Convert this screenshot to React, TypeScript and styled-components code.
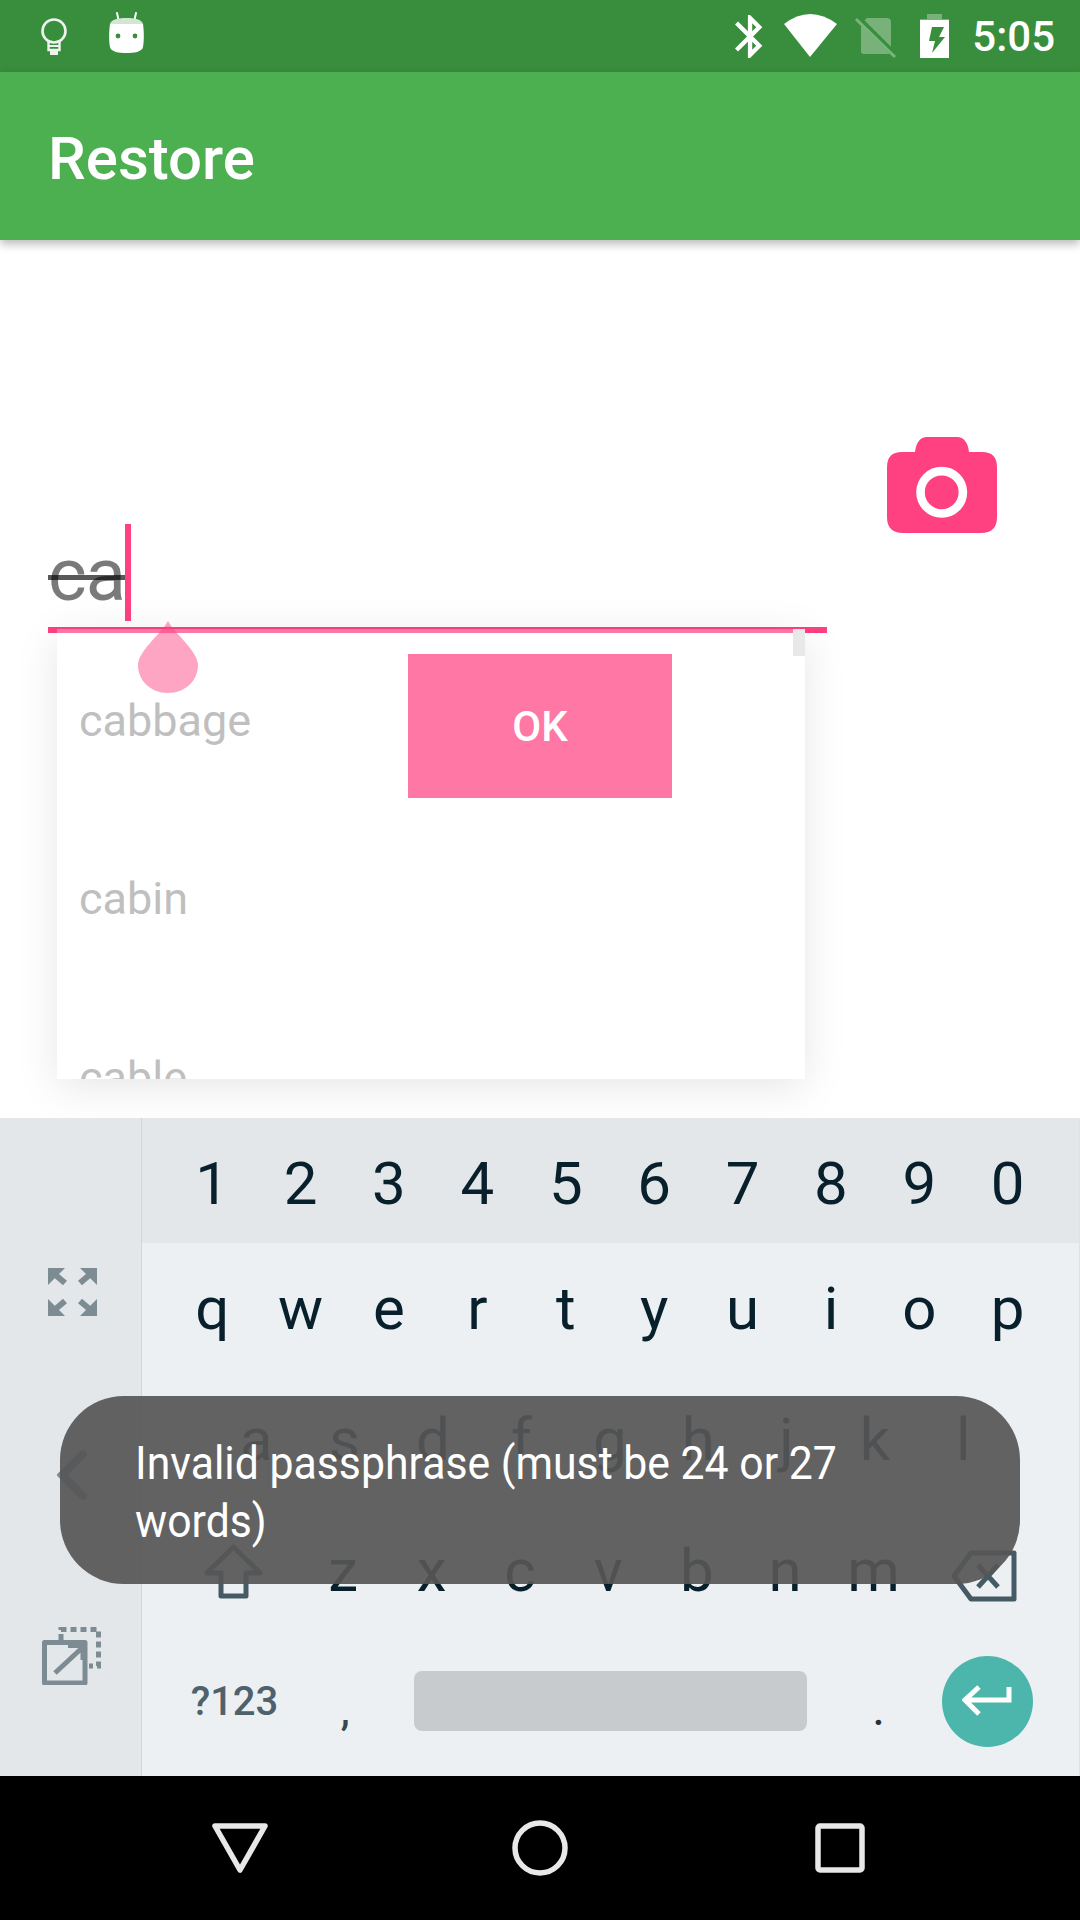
import styled, { createGlobalStyle } from "styled-components";

const GlobalStyle = createGlobalStyle`
    html, body {
        margin: 0;
        padding: 0;
        background: #fff;
        font-family: Roboto, "Noto Sans", sans-serif;
    }
`;

const Page = styled.div`
    position: relative;
    width: 1080px;
    height: 1920px;
    overflow: hidden;
    display: flex;
    flex-direction: column;
    background: #fff;
`;

const StatusBar = styled.div`
    height: 72px;
    background: #388e3c;
    display: flex;
    justify-content: space-between;
    padding: 0 25px 0 41px;
`;
const StatusGroup = styled.div<{ $gap?: number }>`
    display: flex;
    align-items: center;
    gap: ${(p) => p.$gap ?? 0}px;
`;
const Clock = styled.span`
    margin-left: 10px;
    color: #fff;
    font-size: 42px;
    font-weight: 500;
`;

const AppBar = styled.div`
    position: relative;
    z-index: 1;
    height: 168px;
    box-sizing: border-box;
    padding: 4px 0 0 48px;
    background: #4caf50;
    box-shadow: 0 4px 9px rgba(0, 0, 0, 0.28);
    display: flex;
    align-items: center;
`;
const Title = styled.h1`
    margin: 0;
    color: #fff;
    font-size: 60px;
    font-weight: 500;
`;

const Content = styled.div`
    height: 878px;
    box-sizing: border-box;
    padding: 197px 0 0 48px;
    display: flex;
    gap: 60px;
`;
const Field = styled.div`
    width: 779px;
    margin-top: 87px;
    height: 103px;
    border-bottom: 6px solid #ff4081;
    display: flex;
    align-items: flex-start;
`;
const Typed = styled.span`
    font-size: 74px;
    letter-spacing: -1px;
    line-height: 101px;
    color: #7a7a7a;
    text-decoration: line-through;
    text-decoration-color: rgba(0, 0, 0, 0.65);
    text-decoration-thickness: 5px;
`;
const Cursor = styled.span`
    width: 6px;
    height: 97px;
    background: #ff4081;
`;

const OkButton = styled.button`
    position: absolute;
    left: 408px;
    top: 654px;
    width: 264px;
    height: 144px;
    border: 0;
    padding: 0;
    background: #ff4081;
    color: #fff;
    font-family: Roboto, sans-serif;
    font-size: 42px;
    font-weight: 500;
`;
const Suggestions = styled.div`
    position: absolute;
    left: 57px;
    top: 629px;
    width: 748px;
    height: 450px;
    box-sizing: border-box;
    padding-top: 2px;
    overflow: hidden;
    background: rgba(255, 255, 255, 0.29);
    box-shadow: 0 8px 40px rgba(0, 0, 0, 0.1);
`;
const Suggestion = styled.div`
    height: 178.5px;
    display: flex;
    align-items: center;
    padding-left: 22px;
    font-size: 45px;
    color: #bfbfbf;
`;
const ScrollThumb = styled.div`
    position: absolute;
    right: 0;
    top: 0;
    width: 12px;
    height: 27px;
    background: #e8e8e8;
`;
const Handle = styled.svg`
    position: absolute;
    left: 138px;
    top: 621px;
`;

const Keyboard = styled.div`
    position: relative;
    z-index: 2;
    height: 658px;
    display: flex;
    background: #ecf0f3;
    border-right: 1px solid #dfe2e5;
`;
const Rail = styled.div`
    width: 142px;
    flex: none;
    box-sizing: border-box;
    border-right: 1px solid #d2d6d9;
    background: #e3e7ea;
    display: flex;
    flex-direction: column;
    align-items: center;
    padding: 150px 0 0 3px;
    gap: 134px;
`;
const FloatIcon = styled.svg`
    margin-top: -7px;
`;
const Keys = styled.div`
    flex: 1;
    display: flex;
    flex-direction: column;
`;
const Row = styled.div<{ $h?: number; $bg?: string; $indent?: number; $lift?: number }>`
    height: ${(p) => p.$h ?? 131}px;
    background: ${(p) => p.$bg ?? "transparent"};
    box-sizing: border-box;
    padding-left: ${(p) => 26 + (p.$indent ?? 0)}px;
    padding-bottom: ${(p) => p.$lift ?? 0}px;
    display: flex;
`;
const Key = styled.div<{ $w?: number; $size?: number; $weight?: number; $color?: string; $drop?: number }>`
    width: ${(p) => p.$w ?? 88.4}px;
    flex: none;
    display: flex;
    align-items: center;
    justify-content: center;
    font-size: ${(p) => p.$size ?? 60}px;
    font-weight: ${(p) => p.$weight ?? 400};
    color: ${(p) => p.$color ?? "#07202c"};
    padding-top: ${(p) => p.$drop ?? 0}px;
    box-sizing: border-box;
`;
const SpaceBar = styled.div`
    width: 393px;
    height: 60px;
    margin: 0 27px 0 25px;
    align-self: center;
    border-radius: 8px;
    background: #c7cbce;
`;
const EnterKey = styled.div`
    width: 91px;
    height: 91px;
    margin-left: 19px;
    align-self: center;
    border-radius: 50%;
    background: #4db6ac;
    display: flex;
    align-items: center;
    justify-content: center;
`;

const Toast = styled.div`
    position: absolute;
    z-index: 3;
    left: 60px;
    top: 1396px;
    width: 960px;
    height: 188px;
    box-sizing: border-box;
    padding: 4px 0 0 75px;
    border-radius: 64px;
    background: rgba(86, 86, 86, 0.92);
    display: flex;
    align-items: center;
`;
const ToastText = styled.span`
    flex: none;
    width: 866px;
    color: #fff;
    font-size: 46px;
    line-height: 58px;
    transform: scaleX(0.93);
    transform-origin: left center;
`;

const NavBar = styled.div`
    height: 144px;
    background: #000;
    position: relative;
    z-index: 2;
    display: grid;
    grid-template-columns: repeat(3, 300px);
    justify-items: center;
    align-items: center;
    padding: 0 90px;
`;

const digits = ["1", "2", "3", "4", "5", "6", "7", "8", "9", "0"];
const topRow = ["q", "w", "e", "r", "t", "y", "u", "i", "o", "p"];
const midRow = ["a", "s", "d", "f", "g", "h", "j", "k", "l"];
const lowRow = ["z", "x", "c", "v", "b", "n", "m"];
const words = ["cabbage", "cabin", "cable"];

function StatusLeft() {
    return (
        <StatusGroup $gap={40}>
            <svg width="27" height="72" viewBox="0 0 27 72">
                <circle cx="13" cy="31" r="11.5" fill="none" stroke="#eef3ee" strokeWidth="2.6" />
                <path d="M7.5 40V50H18.5V40" fill="none" stroke="#eef3ee" strokeWidth="2.4" />
                <path d="M7.5 46H18.5" stroke="#eef3ee" strokeWidth="2" />
                <rect x="9" y="50" width="8" height="5" fill="#eef3ee" />
            </svg>
            <svg width="37" height="72" viewBox="0 0 37 72">
                <path d="M9 13L11 22M28 13L26 22" stroke="#fff" strokeWidth="2" strokeLinecap="round" />
                <path d="M18.5 18C9 18 3 20 2 24C1 30 .8 42 2 47C3 52 11 53 18.5 53C26 53 34 52 35 47C36.2 42 36 30 35 24C34 20 28 18 18.5 18Z" fill="#fff" />
                <path d="M18.5 18C9 18 3 20 2 24H35C34 20 28 18 18.5 18Z" fill="#388e3c" opacity="0.22" />
                <circle cx="10" cy="36" r="2.4" fill="#388e3c" />
                <circle cx="27" cy="36" r="2.4" fill="#388e3c" />
            </svg>
        </StatusGroup>
    );
}

function StatusRight() {
    return (
        <StatusGroup>
            <svg width="50" height="72" viewBox="0 0 50 72">
                <g transform="translate(-4.75 10.7) scale(2.15)">
                    <path fill="#fff" d="M17.71 7.71L12 2h-1v7.59L6.41 5 5 6.41 10.59 12 5 17.59 6.41 19 11 14.41V22h1l5.71-5.71-4.3-4.29 4.3-4.29zM13 5.83l1.88 1.88L13 9.59V5.83zm1.88 10.46L13 18.17v-3.76l1.88 1.88z" />
                </g>
            </svg>
            <svg width="70" height="72" viewBox="0 0 70 72">
                <path d="M31 57L5 24Q31 4 58 24Z" fill="#fff" />
            </svg>
            <svg width="60" height="72" viewBox="0 0 60 72">
                <path d="M12 24L18 18H37Q42 18 42 22V54H15Q12 54 12 51Z" fill="#fff" opacity="0.32" />
                <path d="M8 17L46 55" stroke="#388e3c" strokeWidth="6" />
                <path d="M7 19L46 57" stroke="#7bb57e" strokeWidth="3" />
            </svg>
            <svg width="53" height="72" viewBox="2 0 53 72">
                <path d="M20 14H35V19H42V30H13V19H20Z" fill="#fff" opacity="0.32" />
                <path d="M13 20H42V58H13Z" fill="#fff" />
                <path d="M25 27H37L32 37H38L25 53L28 41H22Z" fill="#388e3c" />
            </svg>
            <Clock>5:05</Clock>
        </StatusGroup>
    );
}

export default function App() {
    return (
        <Page>
            <GlobalStyle />
            <StatusBar>
                <StatusLeft />
                <StatusRight />
            </StatusBar>
            <AppBar>
                <Title>Restore</Title>
            </AppBar>
            <Content>
                <Field>
                    <Typed>ca</Typed>
                    <Cursor />
                </Field>
                <svg width="110" height="96" viewBox="0 0 110 96">
                    <path fill="#ff4081" d="M15 15H28C29 6 33 0 40 0H70C77 0 81 6 82 15H95Q110 15 110 30V80Q110 96 94 96H16Q0 96 0 80V30Q0 15 15 15Z" />
                    <circle cx="54.7" cy="55.3" r="21.2" fill="none" stroke="#fff" strokeWidth="8.6" />
                </svg>
            </Content>

            <OkButton>OK</OkButton>
            <Suggestions>
                {words.map((w) => <Suggestion key={w}>{w}</Suggestion>)}
                <ScrollThumb />
            </Suggestions>
            <Handle width="60" height="72" viewBox="0 0 60 72">
                <path d="M30 0C36 12 60 30 60 44C60 60 47 72 30 72C13 72 0 60 0 44C0 30 24 12 30 0Z" fill="#ff4081" opacity="0.47" />
            </Handle>

            <Keyboard>
                <Rail>
                    <svg width="49" height="48" viewBox="0 0 49 48" fill="#7d8b93">
                        {[0, 1, 2, 3].map((i) => (
                            <g key={i} transform={`translate(${i % 2 ? 49 : 0} ${i > 1 ? 48 : 0}) scale(${i % 2 ? -1 : 1} ${i > 1 ? -1 : 1})`}>
                                <path d="M0 0H17L0 17Z" />
                                <path d="M4 4L17 15" stroke="#7d8b93" strokeWidth="6" />
                            </g>
                        ))}
                    </svg>
                    <svg width="30" height="50" viewBox="0 0 30 50">
                        <path d="M26 4L5 25L26 46" fill="none" stroke="#7d8b93" strokeWidth="8" strokeLinecap="round" />
                    </svg>
                    <FloatIcon width="60" height="58" viewBox="0 0 60 58" fill="none" stroke="#7d8b93" strokeWidth="5">
                        <path d="M19 13V2.5H56.5V39H47" strokeDasharray="6 4" />
                        <path d="M2.5 15.5H43V56H2.5Z" strokeLinejoin="round" />
                        <path d="M13 46L41 20M26 18.5H41V33" />
                    </FloatIcon>
                </Rail>
                <Keys>
                    <Row $h={125} $bg="#e3e7ea">
                        {digits.map((k) => <Key key={k} $drop={6}>{k}</Key>)}
                    </Row>
                    <Row>
                        {topRow.map((k) => <Key key={k}>{k}</Key>)}
                    </Row>
                    <Row $indent={44}>
                        {midRow.map((k) => <Key key={k}>{k}</Key>)}
                    </Row>
                    <Row>
                        <Key $w={131} $drop={2}>
                            <svg width="59" height="55" viewBox="0 0 59 55" fill="none" stroke="#455a64" strokeWidth="5" strokeLinejoin="round">
                                <path d="M29.5 3L56 29H42V52H17V29H3Z" />
                            </svg>
                        </Key>
                        {lowRow.map((k) => <Key key={k}>{k}</Key>)}
                        <Key $w={133} $drop={10}>
                            <svg width="66" height="52" viewBox="0 0 66 52" fill="none" stroke="#455a64" strokeWidth="5" strokeLinejoin="round">
                                <path d="M20 3H63V49H20L3 26Z" />
                                <path d="M27 15L47 37M47 15L27 37" />
                            </svg>
                        </Key>
                    </Row>
                    <Row $h={140} $lift={10}>
                        <Key $w={133} $size={40} $weight={500} $color="#4f626c">?123</Key>
                        <Key $size={40} $weight={500} $color="#37474f" $drop={20}>,</Key>
                        <SpaceBar />
                        <Key $size={40} $weight={500} $color="#263238" $drop={20}>.</Key>
                        <EnterKey>
                            <svg width="50" height="32" viewBox="0 0 50 32" fill="none" stroke="#fff" strokeWidth="5">
                                <path d="M47 2V15H4M17 2L3 15L17 29" />
                            </svg>
                        </EnterKey>
                    </Row>
                </Keys>
            </Keyboard>

            <NavBar>
                <svg width="56" height="50" viewBox="0 0 56 50" fill="none" stroke="#e8e8e8" strokeWidth="5.5" strokeLinejoin="round">
                    <path d="M3 3H53L28 47Z" />
                </svg>
                <svg width="56" height="56" viewBox="0 0 56 56" fill="none" stroke="#e8e8e8" strokeWidth="5.5">
                    <circle cx="28" cy="28" r="25" />
                </svg>
                <svg width="50" height="50" viewBox="0 0 50 50" fill="none" stroke="#e8e8e8" strokeWidth="5.5" strokeLinejoin="round">
                    <rect x="3" y="3" width="44" height="44" rx="2" />
                </svg>
            </NavBar>

            <Toast>
                <ToastText>Invalid passphrase (must be 24 or 27 words)</ToastText>
            </Toast>
        </Page>
    );
}
